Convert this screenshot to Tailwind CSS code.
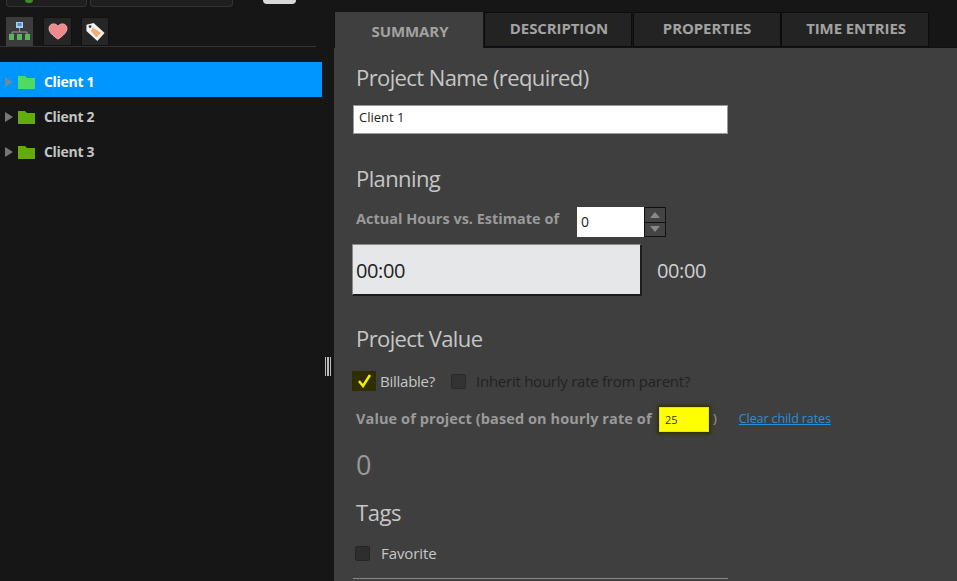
<!doctype html>
<html>
<head>
  <meta charset="UTF-8">
  <script src="https://cdn.jsdelivr.net/npm/@tailwindcss/browser@4"></script>
</head>
<body class="bg-[#161616] font-['Open_Sans',sans-serif] overflow-hidden">
  <div class="relative flex w-[957px] h-[581px] overflow-hidden">

    <!-- left tree -->
    <aside class="w-[334px] shrink-0 flex flex-col">
      <div class="flex h-[7px] items-end pl-[6px] gap-[3px]">
        <div class="w-[81px] h-[7px] bg-[#1f1f1f] border-b border-x border-[#333] rounded-b-sm overflow-hidden"><div class="w-[8px] h-[3px] ml-[18px] bg-[#3c8a2c] rounded-b"></div></div>
        <div class="w-[143px] h-[7px] bg-[#1f1f1f] border-b border-x border-[#333] rounded-b-sm"></div>
        <div class="w-[33px] h-[4px] ml-[27px] mb-[3px] bg-[#d8d8d8] rounded-b-md"></div>
      </div>
      <div class="flex items-end h-[40px] pl-[6px] w-[316px] border-b border-[#333]">
        <div class="w-[27px] h-[29px] bg-[#3c3c3c] flex items-center justify-center">
          <svg width="21" height="19" viewBox="0 0 21 19">
            <rect x="7" y="0" width="7" height="6" fill="#a9d0f2"/>
            <rect x="8.500" y="1" width="4" height="3" fill="#4a8fd0"/>
            <path d="M10.500 6v4M3 12v-2h15v2" stroke="#999" fill="none"/>
            <rect x="0" y="12" width="5" height="6" fill="#58b55c"/>
            <rect x="8" y="12" width="5" height="6" fill="#58b55c"/>
            <rect x="16" y="12" width="5" height="6" fill="#58b55c"/>
          </svg>
        </div>
        <div class="ml-[10px] w-[29px] h-[29px] bg-[#262626] border border-[#111] flex items-center justify-center">
          <svg width="20" height="17" viewBox="0 0 22 19"><path d="M11 18C5 14 1 10.500 1 6 1 3 3.300 1 6 1c2.200 0 4 1 5 2.700C12 2 13.800 1 16 1c2.700 0 5 2 5 5 0 4.500-4 8-10 12z" fill="#f0888c" stroke="#f7c2c2"/></svg>
        </div>
        <div class="ml-[9px] w-[28px] h-[29px] bg-[#262626] border border-[#111] flex items-center justify-center">
          <svg width="21" height="20" viewBox="0 0 22 22"><path d="M1 3l8-2 12 11-8 9L1 10z" fill="#f1f1f1"/><path d="M8 6l9 6-5 5-6-7z" fill="#f0ae74"/><circle cx="5" cy="5" r="1.500" fill="#333"/></svg>
        </div>
      </div>

      <ul class="mt-[15px] flex flex-col font-bold text-[14px] tracking-[-0.3px]">
        <li class="h-[35px] w-[322px] bg-[#0096ff] text-white flex items-center pt-[4px]">
          <span class="ml-[5px] w-0 h-0 border-y-[5px] border-y-transparent border-l-[8px] border-l-[#6b8ca0]"></span>
          <svg class="ml-[5px]" width="17" height="14" viewBox="0 0 17 14"><path d="M0 1h7l2 2h8v11H0z" fill="#4fdb62"/></svg>
          <span class="ml-[9px]">Client 1</span>
        </li>
        <li class="h-[35px] text-[#c4c4c4] flex items-center pt-[4px]">
          <span class="ml-[5px] w-0 h-0 border-y-[5px] border-y-transparent border-l-[8px] border-l-[#777]"></span>
          <svg class="ml-[5px]" width="17" height="14" viewBox="0 0 17 14"><path d="M0 1h7l2 2h8v11H0z" fill="#62ad0c"/></svg>
          <span class="ml-[9px]">Client 2</span>
        </li>
        <li class="h-[35px] text-[#c4c4c4] flex items-center pt-[4px]">
          <span class="ml-[5px] w-0 h-0 border-y-[5px] border-y-transparent border-l-[8px] border-l-[#777]"></span>
          <svg class="ml-[5px]" width="17" height="14" viewBox="0 0 17 14"><path d="M0 1h7l2 2h8v11H0z" fill="#62ad0c"/></svg>
          <span class="ml-[9px]">Client 3</span>
        </li>
      </ul>
    </aside>

    <!-- right panel -->
    <main class="flex-1 flex flex-col pt-[12px]">
      <div class="flex h-[36px] font-bold text-[15px] text-[#a2a2a2] tracking-[-0.1px] border-b border-[#111]">
        <div class="w-[149px] h-[37px] bg-[#3f3f3f] border-l border-[#111] flex items-center justify-center pt-[1px] pl-[2px]">SUMMARY</div>
        <div class="ml-[1px] w-[148px] bg-[#232323] border border-[#0c0c0c] flex items-center justify-center pb-[2px] pl-[2px]">DESCRIPTION</div>
        <div class="ml-[1px] w-[148px] bg-[#232323] border border-[#0c0c0c] flex items-center justify-center pb-[2px]">PROPERTIES</div>
        <div class="w-[148px] bg-[#232323] border border-[#0c0c0c] flex items-center justify-center pb-[2px] pl-[2px]">TIME ENTRIES</div>
      </div>

      <div class="flex-1 bg-[#3f3f3f] pl-[19px] text-[#c6c6c6]">
        <h2 class="mt-[15px] h-[30px] leading-[28px] pl-[3px] text-[22px] tracking-[-0.6px]">Project Name (required)</h2>
        <div class="mt-[12px] w-[375px] h-[29px] bg-white border border-[#999] text-[13px] text-[#222] pl-[5px] pt-[2px]">Client 1</div>

        <h2 class="mt-[30px] h-[30px] leading-[28px] pl-[3px] text-[22px] tracking-[-0.6px]">Planning</h2>
        <div class="mt-[12px] flex items-center h-[32px] pl-[3px]">
          <span class="w-[221px] mb-[6px] font-bold text-[14.5px] text-[#9a9a9a]">Actual Hours vs. Estimate of</span>
          <div class="w-[67px] h-[30px] bg-white text-[14px] text-[#222] pl-[4px] leading-[29px]">0</div>
          <div class="w-[22px] h-[30px] border border-[#111] bg-[#333] flex flex-col">
            <div class="flex-1 bg-[#444] border-b border-[#111] flex items-center justify-center"><span class="w-0 h-0 border-x-[5px] border-x-transparent border-b-[6px] border-b-[#888]"></span></div>
            <div class="flex-1 bg-[#444] flex items-center justify-center"><span class="w-0 h-0 border-x-[5px] border-x-transparent border-t-[6px] border-t-[#888]"></span></div>
          </div>
        </div>
        <div class="mt-[6px] -ml-[1px] flex items-center">
          <div class="w-[290px] h-[52px] bg-[#e6e7e8] border border-[#8a8a8a] border-b-[2px] border-b-[#1c1c1c] border-r-[2px] border-r-[#1c1c1c] text-[#222] text-[20px] pl-[3px] leading-[52px] tracking-[-0.4px]">00:00</div>
          <span class="ml-[15px] pt-[1px] text-[20px] tracking-[-0.4px] text-[#d0d0d0]">00:00</span>
        </div>

        <h2 class="mt-[28px] h-[30px] leading-[28px] pl-[3px] text-[22px] tracking-[-0.6px]">Project Value</h2>
        <div class="mt-[16px] -ml-[1px] flex items-center h-[22px] text-[15px] tracking-[-0.25px]">
          <span class="w-[24px] h-[20px] bg-[#2e2e02] flex items-center justify-center">
            <svg width="15" height="14" viewBox="0 0 15 14"><path d="M2 7l4 5 7-11" fill="none" stroke="#f4f000" stroke-width="2.500"/></svg>
          </span>
          <span class="ml-[4px]">Billable?</span>
          <span class="ml-[16px] w-[15px] h-[15px] bg-[#333] border border-[#2a2a2a] rounded-[2px]"></span>
          <span class="ml-[10px] text-[#222]">Inherit hourly rate from parent?</span>
        </div>
        <div class="mt-[14px] flex items-center h-[26px] pl-[3px]">
          <span class="w-[303px] font-bold text-[14.5px] tracking-[0.1px] text-[#9a9a9a]">Value of project (based on hourly rate of</span>
          <div class="w-[50px] h-[25px] bg-[#ffff00] border border-[#dddd55] shadow-[0_0_3px_2px_#333300] text-[11px] text-[#333] pl-[5px] leading-[24px]">25</div>
          <span class="ml-[4px] text-[13px] text-[#9a9a9a]">)</span>
          <a class="ml-[22px] text-[12.5px] text-[#2a8fd8] underline tracking-[-0.1px]">Clear child rates</a>
        </div>

        <div class="mt-[17px] h-[32px] leading-[32px] pl-[3px] text-[27px] text-[#999]">0</div>
        <h2 class="mt-[17px] h-[30px] leading-[28px] pl-[3px] text-[22px] tracking-[-0.4px]">Tags</h2>
        <div class="mt-[15px] flex items-center h-[20px] pl-[2px] text-[15px] tracking-[-0.1px]">
          <span class="w-[15px] h-[15px] bg-[#2e2e2e] border border-[#262626] rounded-[2px]"></span>
          <span class="ml-[11px]">Favorite</span>
        </div>
        <div class="mt-[15px] w-[375px] h-[1px] bg-[#888]"></div>
      </div>
    </main>

    <!-- splitter handle -->
    <div class="absolute left-[325px] top-[357px] w-[6px] h-[19px] border-x border-[#bbb] flex justify-center"><span class="w-[2px] h-full bg-[#bbb]"></span></div>
  </div>
</body>
</html>
